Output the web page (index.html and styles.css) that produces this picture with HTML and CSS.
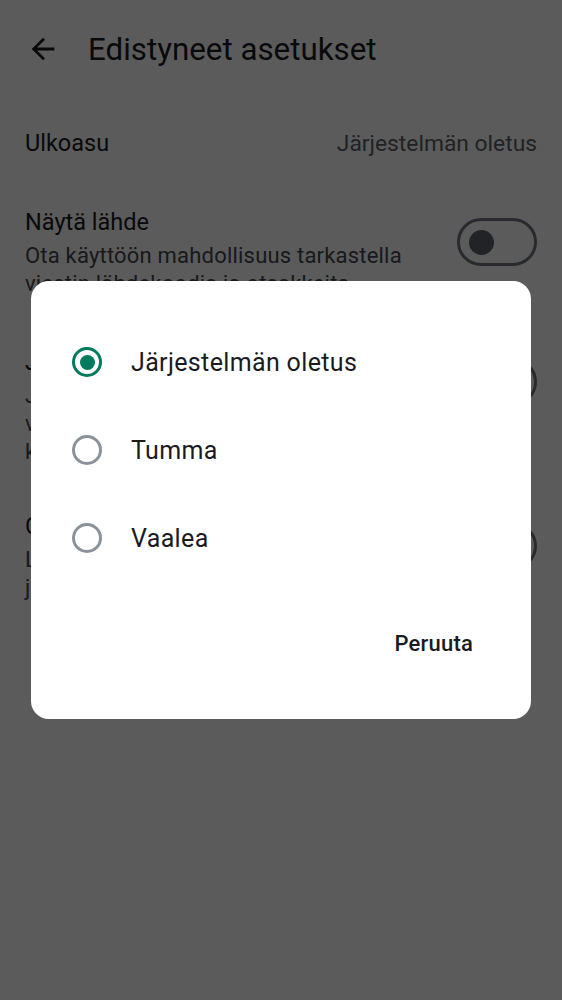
FILE: index.html
```html
<!DOCTYPE html>
<html lang="fi">
<head>
<meta charset="utf-8">
<link rel="stylesheet" href="styles.css">
</head>
<body>
<div class="page">
  <header class="appbar">
    <svg class="back" width="34" height="34" viewBox="0 0 24 24"><path d="M20 11H7.83l5.59-5.59L12 4l-8 8 8 8 1.41-1.41L7.83 13H20v-2z" fill="currentColor"/></svg>
    <h1 class="title">Edistyneet asetukset</h1>
  </header>
  <div class="list">
    <div class="row row-simple">
      <span class="label">Ulkoasu</span>
      <span class="value">Järjestelmän oletus</span>
    </div>
    <div class="row row-first">
      <div class="text">
        <div class="label">Näytä lähde</div>
        <div class="desc">Ota käyttöön mahdollisuus tarkastella<br>viestin lähdekoodia ja otsakkeita</div>
      </div>
      <div class="switch"><span class="knob"></span></div>
    </div>
    <div class="row row-mid">
      <div class="text">
        <div class="label">JavaScript</div>
        <div class="desc">JavaScriptin salliminen voi<br>vaikuttaa viestien näyttämiseen ja<br>kuitenkin heikentää tietosuojaa</div>
      </div>
      <div class="switch"><span class="knob"></span></div>
    </div>
    <div class="row row-last">
      <div class="text">
        <div class="label">Crash-raportit</div>
        <div class="desc">Lähetä virheraportit kehittäjille,<br>jotta sovellusta voidaan parantaa</div>
      </div>
      <div class="switch"><span class="knob"></span></div>
    </div>
  </div>
</div>
<div class="scrim">
  <div class="dialog">
    <div class="options">
      <div class="option"><span class="radio checked"></span><span class="opt-label">Järjestelmän oletus</span></div>
      <div class="option"><span class="radio"></span><span class="opt-label">Tumma</span></div>
      <div class="option"><span class="radio"></span><span class="opt-label">Vaalea</span></div>
    </div>
    <div class="actions">
      <span class="btn">Peruuta</span>
    </div>
  </div>
</div>
</body>
</html>
```

FILE: styles.css
```css
* { box-sizing: border-box; }
html, body { margin: 0; padding: 0; }
body {
  width: 562px;
  height: 1000px;
  overflow: hidden;
  background: #ffffff;
  font-family: Roboto, "Liberation Sans", sans-serif;
  color: #1b1b1f;
}
.page { height: 1000px; }
.appbar {
  height: 98px;
  display: flex;
  align-items: center;
  padding-left: 26px;
}
.back { color: #1b1b1f; display: block; flex: none; }
.title {
  margin: 0 0 0 28px;
  font-size: 31.3px;
  font-weight: 400;
  color: #1b1b1f;
}
.list { padding: 0 25px; }
.row { display: flex; justify-content: space-between; }
.row-simple {
  height: 90px;
  align-items: center;
}
.label { font-size: 23.5px; line-height: 34px; color: #1b1b1f; }
.value { font-size: 22.8px; color: #5c5f66; }
.desc { font-size: 22px; line-height: 28px; color: #44474e; letter-spacing: 0.2px; white-space: nowrap; }
.row-first { padding-top: 17px; }
.row-mid { padding-top: 47px; }
.row-last { padding-top: 43px; }
.text { min-width: 0; }
.text .label { margin-bottom: 3px; }
.switch {
  flex: none;
  width: 80px;
  height: 48px;
  border: 3px solid #74777f;
  border-radius: 24px;
  margin-top: 13px;
  display: flex;
  align-items: center;
  padding-left: 9px;
}
.knob {
  width: 25px;
  height: 25px;
  border-radius: 50%;
  background: #5e636a;
}
.scrim {
  position: fixed;
  inset: 0;
  background: rgba(0, 0, 0, 0.643);
  display: flex;
  align-items: center;
  justify-content: center;
}
.dialog {
  width: 500px;
  height: 438px;
  background: #ffffff;
  border-radius: 18px;
  padding-top: 37px;
  display: flex;
  flex-direction: column;
}
.option {
  height: 88px;
  display: flex;
  align-items: center;
  padding-left: 41px;
}
.radio {
  width: 30px;
  height: 30px;
  border-radius: 50%;
  border: 3px solid #8b9199;
  display: flex;
  align-items: center;
  justify-content: center;
  flex: none;
}
.radio.checked { border-color: #017a5e; }
.radio.checked::after {
  content: "";
  width: 15px;
  height: 15px;
  border-radius: 50%;
  background: #017a5e;
}
.opt-label {
  margin-left: 29px;
  font-size: 25px;
  color: #1b1b1f;
  letter-spacing: 0.35px;
}
.actions {
  display: flex;
  justify-content: flex-end;
  padding-right: 58px;
  margin-top: 37px;
}
.btn {
  height: 48px;
  display: flex;
  align-items: center;
  font-size: 22px;
  font-weight: 500;
  color: #1b1b1f;
  letter-spacing: 0.2px;
}
```
